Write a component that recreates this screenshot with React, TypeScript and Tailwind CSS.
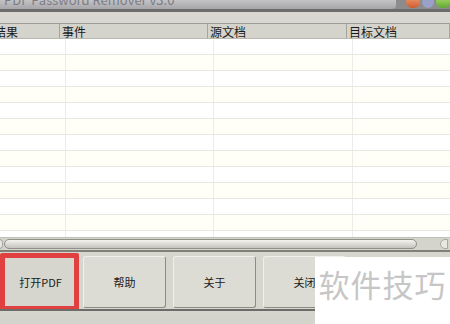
import React from 'react';

const cols = [
  { label: '结果', w: 'w-[66px]', pad: 'pl-0 -ml-[6px]' },
  { label: '事件', w: 'w-[148px]', pad: 'pl-[2px]' },
  { label: '源文档', w: 'w-[139px]', pad: 'pl-[2px]' },
  { label: '目标文档', w: 'flex-1', pad: 'pl-[2px]' },
];

const rows = Array.from({ length: 13 });

const font = { fontFamily: '"Noto Sans CJK SC", "DejaVu Sans", sans-serif' };

const App: React.FC = () => {
  return (
    <div className="w-[450px] h-[324px] overflow-hidden bg-[#d6d6ce] flex flex-col text-[#1a1a1a]" style={font}>
      {/* title bar, mostly cut off */}
      <div className="h-[9px] flex shrink-0 bg-[#8c8c8c]">
        <div className="w-[402px] h-full bg-gradient-to-b from-[#c4c4c6] to-[#a6a6aa] rounded-br-[4px] overflow-hidden">
          <div className="text-[13px] leading-[13px] -mt-[7px] pl-[4px] text-[#7c7c86] whitespace-nowrap">
            PDF Password Remover v3.0
          </div>
        </div>
        <div className="flex-1 flex items-start gap-[2px] pl-[10px] -mt-[4px]">
          <div className="w-[14px] h-[12px] rounded-full bg-gradient-to-b from-[#f0a070] to-[#d05a30]" />
          <div className="w-[12px] h-[12px] rounded-full bg-[#9aa0c8]" />
          <div className="w-[14px] h-[12px] rounded-full bg-gradient-to-b from-[#b0e070] to-[#60a830]" />
        </div>
      </div>
      <div className="h-[3px] shrink-0 bg-[#6c6c6c]" />
      <div className="h-[11px] shrink-0 bg-[#d8d8d0]" />

      {/* list view */}
      <div className="h-[214px] shrink-0 flex flex-col bg-white overflow-hidden border-t border-[#9c9c98]">
        <div className="h-[15px] flex shrink-0 bg-[#d4d4cc] border-b border-[#b8b8b0]">
          {cols.map((c, i) => (
            <div
              key={i}
              className={`${c.w} h-full text-[12px] leading-[15px] border-r border-[#a4a4a0] whitespace-nowrap overflow-hidden ${c.pad}`}
            >
              {c.label}
            </div>
          ))}
        </div>
        <div className="flex-1 flex flex-col overflow-hidden">
          {rows.map((_, r) => (
            <div key={r} className={`h-[16px] shrink-0 flex border-b border-[#e8e8e2] ${r % 2 === 0 ? 'bg-white' : 'bg-[#fffff8]'}`}>
              <div className="w-[66px] border-r border-[#ecece8]" />
              <div className="w-[148px] border-r border-[#ecece8]" />
              <div className="w-[139px] border-r border-[#ecece8]" />
              <div className="flex-1" />
            </div>
          ))}
        </div>
      </div>

      {/* horizontal scrollbar */}
      <div className="h-[13px] shrink-0 bg-[#d4d4cc] flex items-center border-t border-[#c0c0b8]">
        <div className="w-[4px] h-[10px] rounded-r-full border border-[#a8a8a0] bg-[#e8e8e0] -ml-[1px]" />
        <div className="w-[413px] h-[10px] ml-[1px] rounded-full border border-[#909088] bg-gradient-to-b from-[#f4f4f0] via-[#dcdcd4] to-[#c4c4bc]" />
        <div className="flex-1" />
        <div className="w-[8px] h-[10px] rounded-l-full border border-[#a8a8a0] bg-[#e8e8e0] mr-[2px]" />
      </div>
      <div className="h-[2px] shrink-0 bg-[#808078]" />

      {/* buttons */}
      <div className="h-[61px] shrink-0 flex relative">
        <div className="flex items-start pt-[1px] gap-[4px]">
          <div className="w-[79px] h-[58px] border-[5px] border-[#e04040] rounded-[2px] bg-[#d6d6ce] flex items-center justify-center">
            <div className="text-[11px] pl-[2px]">打开PDF</div>
          </div>
          <div className="w-[83px] h-[52px] mt-[3px] rounded-[3px] border border-[#8c8c84] border-t-[#f0f0ea] border-l-[#f0f0ea] bg-[#dcdcd4] flex items-center justify-center text-[11px]">
            帮助
          </div>
          <div className="w-[83px] h-[52px] mt-[3px] ml-[3px] rounded-[3px] border border-[#8c8c84] border-t-[#f0f0ea] border-l-[#f0f0ea] bg-[#dcdcd4] flex items-center justify-center text-[11px]">
            关于
          </div>
          <div className="w-[83px] h-[52px] mt-[3px] ml-[3px] rounded-[3px] border border-[#8c8c84] border-t-[#f0f0ea] border-l-[#f0f0ea] bg-[#dcdcd4] flex items-center justify-center text-[11px]">
            关闭
          </div>
        </div>
        <div className="absolute left-0 right-0 bottom-[2px] h-[2px] bg-[#6c6c68]" />
        {/* watermark */}
        <div className="absolute left-[315px] top-[5px] w-[135px] h-[70px] bg-white flex items-start justify-center pt-[9px]">
          <span className="text-[31px] leading-[36px] text-[#c6c6c6] tracking-[1px]">软件技巧</span>
        </div>
      </div>
      <div className="flex-1 bg-[#d4d4cc]" />
    </div>
  );
};

export default App;
